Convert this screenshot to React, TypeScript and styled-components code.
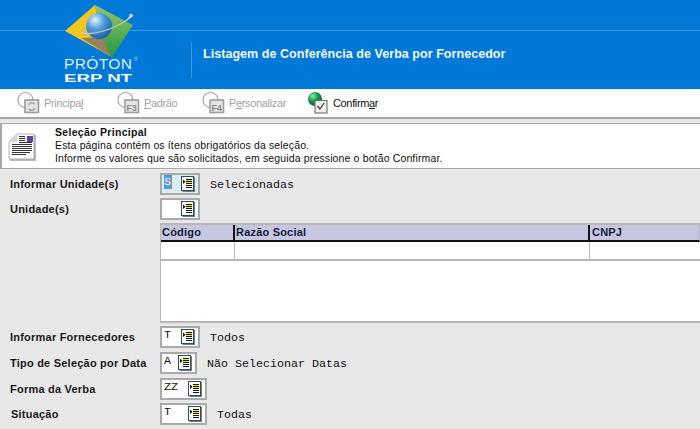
import React from "react";
import styled, { createGlobalStyle } from "styled-components";

const GlobalStyle = createGlobalStyle`
  html, body { margin: 0; padding: 0; background: #e8e8e8; }
  body { width: 700px; height: 429px; overflow: hidden; font-family: "Liberation Sans", Arial, sans-serif; }
`;

const Page = styled.div`
  width: 700px;
  height: 429px;
  display: flex;
  flex-direction: column;
  overflow: hidden;
`;

const Header = styled.header`
  height: 89px;
  flex: none;
  display: flex;
  align-items: flex-start;
  padding-left: 60px;
  box-sizing: border-box;
  background: linear-gradient(
    to bottom,
    #0078d7 0,
    #0078d7 30px,
    #3f97de 30px,
    #3f97de 31px,
    #0078d7 31px
  );
`;

const LogoSvg = styled.svg`
  width: 80px;
  height: 85px;
  flex: none;
`;

const HeaderRule = styled.div`
  width: 1px;
  height: 35px;
  margin: 43px 11px 0 51px;
  background: #3f97de;
`;

const HeaderTitle = styled.h1`
  margin: 47px 0 0;
  font-size: 12.5px;
  line-height: 15px;
  font-weight: 700;
  color: #f2f8fd;
  letter-spacing: 0.05px;
`;

const Toolbar = styled.nav`
  height: 30px;
  flex: none;
  box-sizing: border-box;
  display: flex;
  align-items: center;
  background: #fff;
  border-bottom: 2px solid #a6a6a6;
  padding-left: 17px;
`;

const ToolButton = styled.div<{ $width: number; $off?: boolean }>`
  width: ${(p) => p.$width}px;
  flex: none;
  display: flex;
  align-items: center;
  gap: ${(p) => (p.$off ? 4 : 3)}px;
  font-size: 11px;
  letter-spacing: -0.35px;
  color: ${(p) => (p.$off ? "#a3a3a3" : "#111")};
  u { text-underline-offset: 1px; }
`;

const InfoPanel = styled.section`
  height: 46px;
  flex: none;
  box-sizing: border-box;
  margin: 4px 0 0;
  display: flex;
  background: #fff;
  border: 1px solid #a8a8a8;
  border-right: 0;
  border-left-width: 2px;
`;

const DocIcon = styled.svg`
  width: 28px;
  height: 28px;
  margin: 9px 0 0 6px;
  flex: none;
`;

const InfoText = styled.div`
  margin: 2px 0 0 19px;
  font-size: 10.5px;
  line-height: 13px;
  color: #111;
  letter-spacing: 0.14px;
`;

const InfoTitle = styled.div`
  font-weight: 700;
  letter-spacing: 0.3px;
`;

const FormArea = styled.main`
  flex: 1;
  padding: 4px 0 0 10px;
  display: flex;
  flex-direction: column;
`;

const Row = styled.div<{ $gap?: number }>`
  height: 22px;
  display: flex;
  align-items: center;
  margin-bottom: ${(p) => p.$gap ?? 3}px;
`;

const Label = styled.label<{ $indent?: number }>`
  width: 150px;
  flex: none;
  box-sizing: border-box;
  padding-left: ${(p) => p.$indent ?? 0}px;
  font-size: 11px;
  font-weight: 700;
  letter-spacing: 0.22px;
  color: #1a1a1a;
  white-space: nowrap;
`;

const Field = styled.div<{ $width: number; $focus?: boolean }>`
  width: ${(p) => p.$width}px;
  height: 22px;
  flex: none;
  box-sizing: border-box;
  border: 2px solid #a9a9a9;
  background: ${(p) => (p.$focus ? "#d8eef4" : "#fff")};
  display: flex;
  align-items: flex-start;
  justify-content: space-between;
  padding: 0 3px 0 2px;
`;

const FieldValue = styled.span<{ $selected?: boolean }>`
  font-family: "Liberation Mono", "Courier New", monospace;
  font-size: 11.67px;
  line-height: 14px;
  height: 14px;
  color: ${(p) => (p.$selected ? "#fff" : "#111")};
  background: ${(p) => (p.$selected ? "#4a9be8" : "transparent")};
  border-right: ${(p) => (p.$selected ? "1px solid #c9803a" : "0")};
`;

const Description = styled.span<{ $left: number }>`
  margin-left: ${(p) => p.$left}px;
  padding-top: 2px;
  font-family: "Liberation Mono", "Courier New", monospace;
  font-size: 11.67px;
  color: #111;
  white-space: pre;
`;

const Grid = styled.div`
  margin: 0 0 3px 150px;
  height: 100px;
  flex: none;
  box-sizing: border-box;
  background: #fff;
  border: 1px solid #b8b8b8;
  border-top-width: 2px;
  border-bottom-width: 2px;
  border-right: 0;
`;

const GridRow = styled.div`
  display: grid;
  grid-template-columns: 74px 355px 1fr;
`;

const HeadCell = styled.div`
  height: 17px;
  box-sizing: border-box;
  padding-left: 1px;
  background: #c6c6e0;
  border-right: 2px solid #111;
  border-bottom: 2px solid #111;
  font-size: 11px;
  line-height: 15px;
  font-weight: 700;
  letter-spacing: 0.2px;
  color: #141a3a;
  &:last-child {
    border-right: 1px solid #b8b8b8;
    padding-left: 2px;
  }
`;

const BodyCell = styled.div`
  height: 19px;
  box-sizing: border-box;
  border-right: 1px solid #b8b8b8;
  border-bottom: 2px solid #b8b8b8;
  &:last-child {
    border-right: 0;
  }
`;

const LookupIcon = () => (
  <svg width="14" height="16" viewBox="0 0 14 16" style={{ flex: "none", marginTop: 1 }}>
    <rect x="1.5" y="1" width="12.5" height="15" fill="#6f7f88" />
    <rect x="0.5" y="0.5" width="12" height="14" fill="#fff" stroke="#2f4f5f" />
    <rect x="5" y="3" width="6" height="1" fill="#111" />
    <rect x="5" y="4" width="6" height="3" fill="#ffe600" />
    <rect x="5" y="5" width="6" height="1" fill="#111" />
    <rect x="5" y="7" width="6" height="1" fill="#111" />
    <rect x="5" y="9" width="6" height="1" fill="#111" />
    <rect x="5" y="11" width="6" height="1" fill="#111" />
    <path d="M2 3.5v4.500l2.500-2.250z" fill="#111" />
  </svg>
);

const KeyIcon = ({ keyName }: { keyName: string }) => (
  <svg width="23" height="24" viewBox="0 0 23 24" style={{ flex: "none" }}>
    <circle cx="8.500" cy="9" r="7.500" fill="#fff" stroke="#a8a8a8" strokeWidth="1.200" />
    <rect x="8" y="9" width="13.500" height="12.500" fill="#e4e4e4" stroke="#9c9c9c" strokeWidth="1.600" />
    {keyName ? (
      <text x="9.500" y="19.500" fontFamily="Liberation Sans" fontWeight="700" fontSize="9" fill="#8a8a8a">
        {keyName}
      </text>
    ) : (
      <path d="M11.500 14a3.500 3.500 0 0 1 6-1M18 17a3.500 3.500 0 0 1-6 1" fill="none" stroke="#a0a0a0" strokeWidth="1.400" />
    )}
  </svg>
);

const ConfirmIcon = () => (
  <svg width="23" height="24" viewBox="0 0 23 24" style={{ flex: "none" }}>
    <defs>
      <radialGradient id="confirmBall" cx="0.35" cy="0.3" r="0.8">
        <stop offset="0" stopColor="#9fe0b0" />
        <stop offset="0.45" stopColor="#0f9a4c" />
        <stop offset="1" stopColor="#06502c" />
      </radialGradient>
    </defs>
    <circle cx="8" cy="8" r="7" fill="url(#confirmBall)" />
    <rect x="8" y="9.500" width="12" height="12.500" fill="#f0f0f0" stroke="#777" strokeWidth="1.200" />
    <path d="M10.500 15l2.500 3 4-6" fill="none" stroke="#3a3a3a" strokeWidth="1.300" />
  </svg>
);

const Logo = () => (
  <LogoSvg viewBox="60 0 80 85">
    <defs>
      <radialGradient id="globe" cx="0.35" cy="0.28" r="0.85">
        <stop offset="0" stopColor="#e9f4fb" />
        <stop offset="0.4" stopColor="#4f9fdc" />
        <stop offset="1" stopColor="#0d4f94" />
      </radialGradient>
      <linearGradient id="leaf" x1="0" y1="0" x2="0" y2="1">
        <stop offset="0" stopColor="#9bc46a" />
        <stop offset="1" stopColor="#1f9a3f" />
      </linearGradient>
    </defs>
    <path d="M95 5L65 31l47 26-9-14z" fill="#f2c81e" />
    <path d="M95 5l38 20-21 32-9-14z" fill="url(#leaf)" />
    <path d="M81 38l21-1 10 20z" fill="#94805a" />
    <circle cx="99" cy="26" r="13" fill="url(#globe)" />
    <path
      d="M83 34c10 2 34-5 49-17 2-2 1-3-3-3 2 2-1 5-8 9-14 8-32 12-38 9-1-1 0-3 2-4-3 1-5 4-2 6z"
      fill="#dfe6ea"
      stroke="#8e9aa3"
      strokeWidth="0.5"
    />
    <text x="64" y="68.500" fontFamily="Liberation Sans" fontSize="15.500" fill="#dcebf8" textLength="68">
      PRÓTON
    </text>
    <text x="134" y="61" fontFamily="Liberation Sans" fontSize="5" fill="#b8d6f0">
      ®
    </text>
    <text x="64" y="81.500" fontFamily="Liberation Sans" fontWeight="700" fontSize="10.500" fill="#f4f9fd" textLength="68" lengthAdjust="spacingAndGlyphs">
      ERP NT
    </text>
  </LogoSvg>
);

const App = () => {
  return (
    <Page>
      <GlobalStyle />
      <Header>
        <Logo />
        <HeaderRule />
        <HeaderTitle>Listagem de Conferência de Verba por Fornecedor</HeaderTitle>
      </Header>
      <Toolbar>
        <ToolButton $off $width={100}>
          <KeyIcon keyName="" />
          <span>
            Principa<u>l</u>
          </span>
        </ToolButton>
        <ToolButton $off $width={85}>
          <KeyIcon keyName="F3" />
          <span>
            <u>P</u>adrão
          </span>
        </ToolButton>
        <ToolButton $off $width={105}>
          <KeyIcon keyName="F4" />
          <span>
            P<u>e</u>rsonalizar
          </span>
        </ToolButton>
        <ToolButton $width={90}>
          <ConfirmIcon />
          <span>
            Confirm<u>a</u>r
          </span>
        </ToolButton>
      </Toolbar>
      <InfoPanel>
        <DocIcon viewBox="0 0 28 28">
          <path d="M10 2h18v26H2V10z" fill="#b9b9b9" />
          <path d="M9 1h17v25H1V9z" fill="#fbfbfb" stroke="#a0a0a0" strokeWidth="0.800" />
          <path d="M9 1v8H1z" fill="#d6d6d6" />
          <rect x="19" y="3" width="6" height="6" fill="#6a3fa5" />
          <path
            d="M11 3.500h6M11 5.500h6M11 7.500h6M11 9.500h13M4 11.500h20M4 13.500h20M4 15.500h20M4 17.500h20M4 19.500h18M4 21.500h14"
            stroke="#333"
            strokeWidth="1"
          />
        </DocIcon>
        <InfoText>
          <InfoTitle>Seleção Principal</InfoTitle>
          <div>Esta página contém os ítens obrigatórios da seleção.</div>
          <div>Informe os valores que são solicitados, em seguida pressione o botão Confirmar.</div>
        </InfoText>
      </InfoPanel>
      <FormArea>
        <Row>
          <Label>Informar Unidade(s)</Label>
          <Field $width={40} $focus>
            <FieldValue $selected>S</FieldValue>
            <LookupIcon />
          </Field>
          <Description $left={10}>Selecionadas</Description>
        </Row>
        <Row>
          <Label>Unidade(s)</Label>
          <Field $width={40}>
            <FieldValue />
            <LookupIcon />
          </Field>
        </Row>
        <Grid>
          <GridRow>
            <HeadCell>Código</HeadCell>
            <HeadCell>Razão Social</HeadCell>
            <HeadCell>CNPJ</HeadCell>
          </GridRow>
          <GridRow>
            <BodyCell />
            <BodyCell />
            <BodyCell />
          </GridRow>
        </Grid>
        <Row $gap={4}>
          <Label>Informar Fornecedores</Label>
          <Field $width={40}>
            <FieldValue>T</FieldValue>
            <LookupIcon />
          </Field>
          <Description $left={10}>Todos</Description>
        </Row>
        <Row $gap={4}>
          <Label>Tipo de Seleção por Data</Label>
          <Field $width={37}>
            <FieldValue>A</FieldValue>
            <LookupIcon />
          </Field>
          <Description $left={10}>Não Selecionar Datas</Description>
        </Row>
        <Row $gap={3}>
          <Label>Forma da Verba</Label>
          <Field $width={47}>
            <FieldValue>ZZ</FieldValue>
            <LookupIcon />
          </Field>
        </Row>
        <Row $gap={0}>
          <Label $indent={1}>Situação</Label>
          <Field $width={47}>
            <FieldValue>T</FieldValue>
            <LookupIcon />
          </Field>
          <Description $left={10}>Todas</Description>
        </Row>
      </FormArea>
    </Page>
  );
};

export default App;
